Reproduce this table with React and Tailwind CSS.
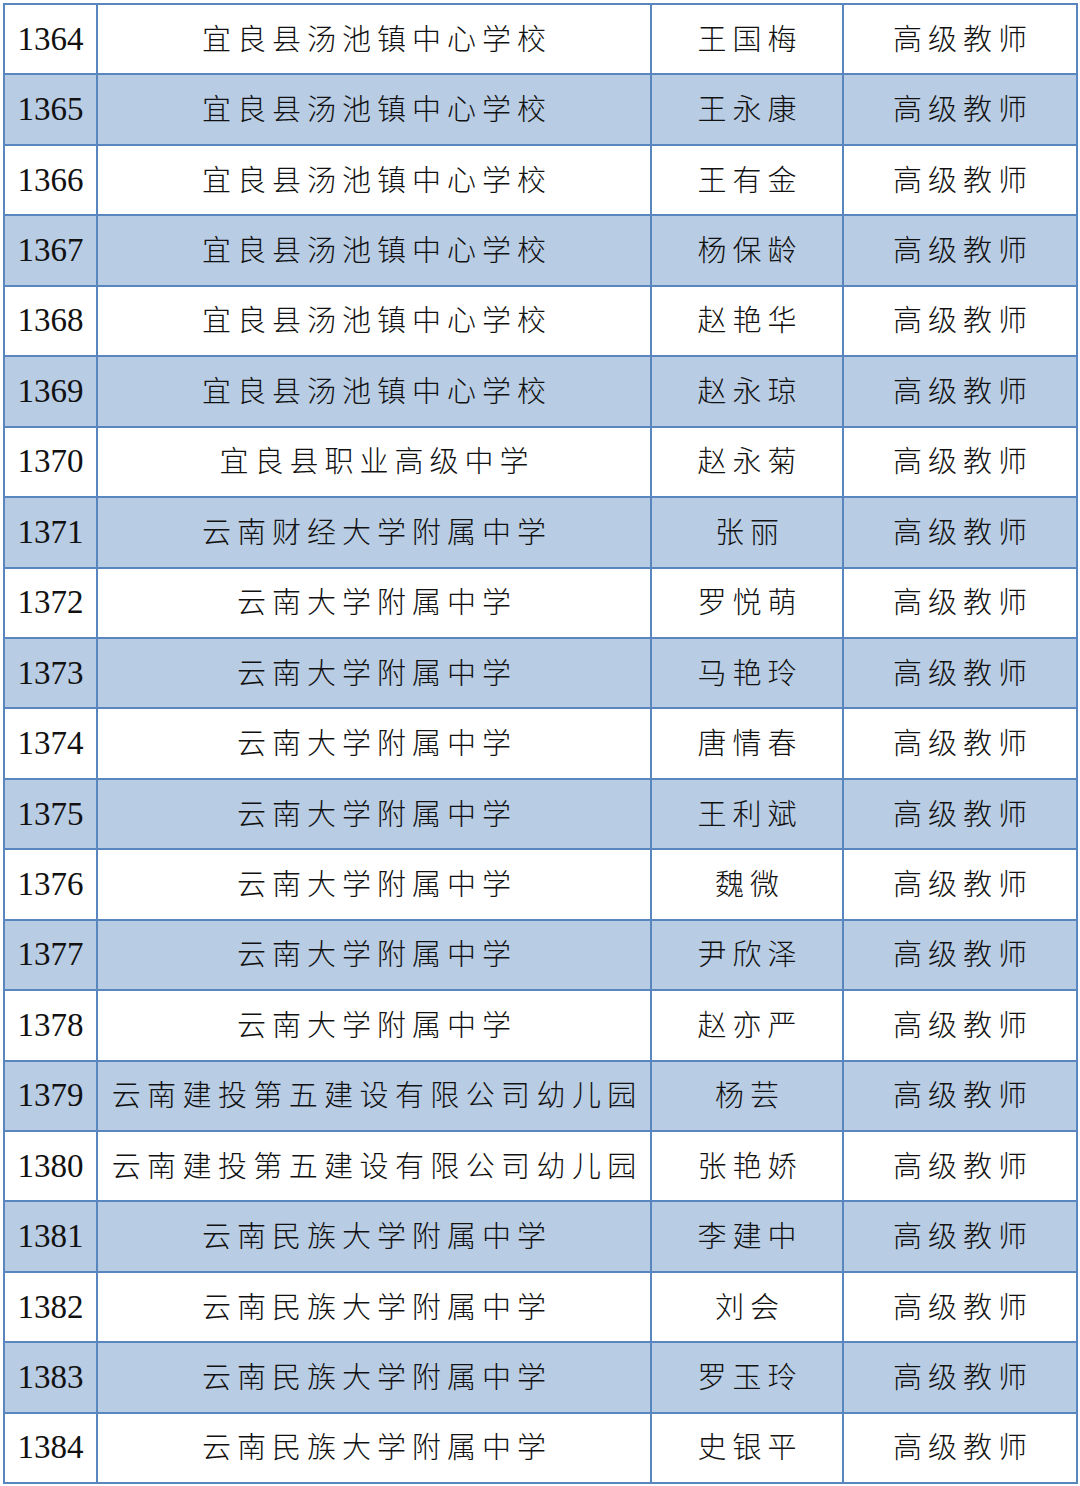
import React from 'react';

const rows = [
  ['1364', '宜良县汤池镇中心学校', '王国梅'],
  ['1365', '宜良县汤池镇中心学校', '王永康'],
  ['1366', '宜良县汤池镇中心学校', '王有金'],
  ['1367', '宜良县汤池镇中心学校', '杨保龄'],
  ['1368', '宜良县汤池镇中心学校', '赵艳华'],
  ['1369', '宜良县汤池镇中心学校', '赵永琼'],
  ['1370', '宜良县职业高级中学', '赵永菊'],
  ['1371', '云南财经大学附属中学', '张丽'],
  ['1372', '云南大学附属中学', '罗悦萌'],
  ['1373', '云南大学附属中学', '马艳玲'],
  ['1374', '云南大学附属中学', '唐情春'],
  ['1375', '云南大学附属中学', '王利斌'],
  ['1376', '云南大学附属中学', '魏微'],
  ['1377', '云南大学附属中学', '尹欣泽'],
  ['1378', '云南大学附属中学', '赵亦严'],
  ['1379', '云南建投第五建设有限公司幼儿园', '杨芸'],
  ['1380', '云南建投第五建设有限公司幼儿园', '张艳娇'],
  ['1381', '云南民族大学附属中学', '李建中'],
  ['1382', '云南民族大学附属中学', '刘会'],
  ['1383', '云南民族大学附属中学', '罗玉玲'],
  ['1384', '云南民族大学附属中学', '史银平'],
];

const cjk = "font-['Noto_Sans_CJK_SC',sans-serif] font-light text-[29px] text-[#111] whitespace-nowrap";
const cell = 'border-2 border-[#5a86bf] h-[70.45px] p-0 text-center align-middle whitespace-nowrap';

export default function App() {
  return (
    <div className="bg-white w-[1080px] h-[1486px] pt-[3px] pl-[3px]">
      <table className="border-collapse table-fixed w-[1073px]">
        <colgroup>
          <col className="w-[93px]" />
          <col className="w-[554px]" />
          <col className="w-[192px]" />
          <col className="w-[234px]" />
        </colgroup>
        <tbody>
          {rows.map(([no, school, name], i) => (
            <tr key={no} className={i % 2 === 1 ? 'bg-[#b8cce4]' : 'bg-white'}>
              <td className={cell}>
                <span className="font-['Liberation_Serif',serif] text-[33px] text-[#111] leading-none">{no}</span>
              </td>
              <td className={cell}>
                <span className={`${cjk} leading-none ${school.length > 12 ? 'tracking-[6.4px] mr-[-6.4px]' : 'tracking-[6px] mr-[-6px]'}`}>{school}</span>
              </td>
              <td className={cell}>
                <span className={`${cjk} leading-none tracking-[6px] mr-[-6px]`}>{name}</span>
              </td>
              <td className={cell}>
                <span className={`${cjk} leading-none tracking-[6px] mr-[-6px]`}>高级教师</span>
              </td>
            </tr>
          ))}
        </tbody>
      </table>
    </div>
  );
}
